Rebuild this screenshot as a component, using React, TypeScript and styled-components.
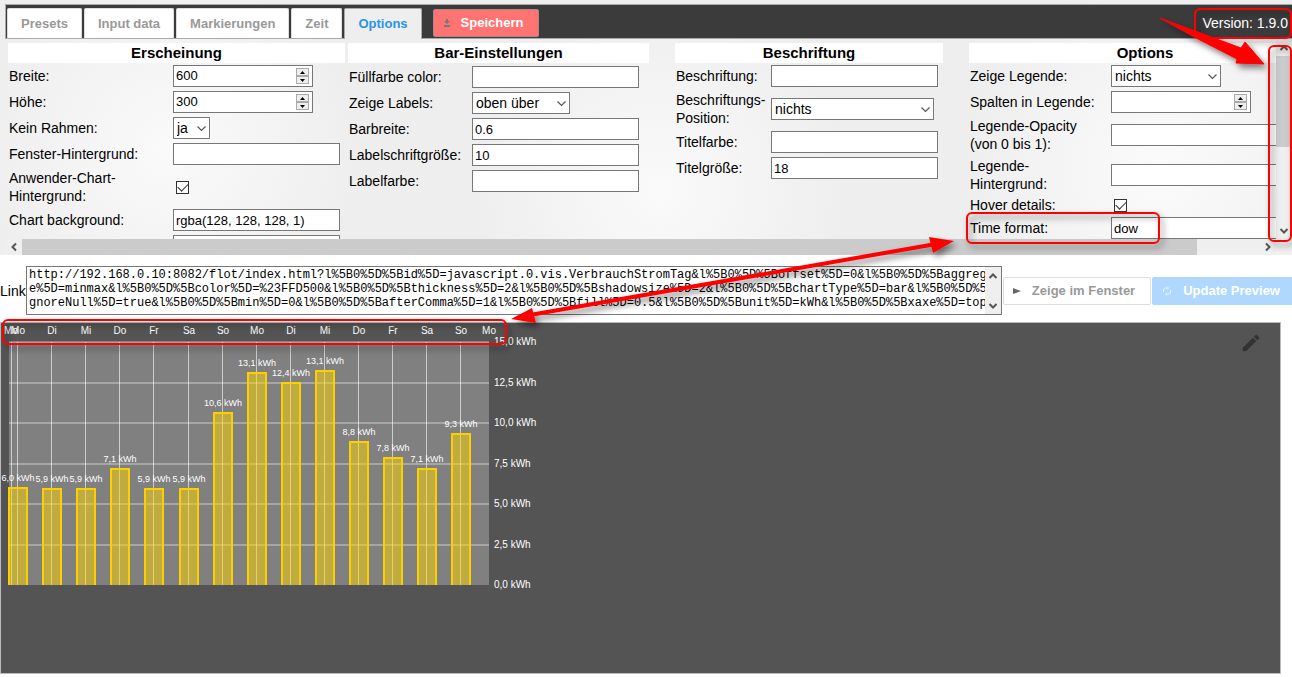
import React, { useId } from "react";
import styled, { createGlobalStyle, css } from "styled-components";

const Global = createGlobalStyle`
  * { box-sizing: border-box; }
  body {
    margin: 0;
    background: #fff;
    color: #000;
    font: 14px/18px "Liberation Sans", Arial, sans-serif;
    overflow: hidden;
  }
  input, select, textarea, button { font: inherit; margin: 0; border-radius: 0; }
`;

const Page = styled.div`
  position: relative;
`;

const Editor = styled.section`
  padding: 4px 0 0 5px;
  background:
    radial-gradient(circle at 170px 150px, #fafafa, rgba(250, 250, 250, 0) 190px),
    radial-gradient(circle at 660px 190px, #fafafa, rgba(250, 250, 250, 0) 190px),
    radial-gradient(circle at 1160px 170px, #fbfbfb, rgba(251, 251, 251, 0) 200px),
    #eee;
`;

const TabBar = styled.header`
  display: flex;
  align-items: flex-start;
  height: 35px;
  padding: 3px 0 0 1px;
  background: #3b3b3b;
  border: solid #aaa;
  border-width: 1px 0 1px 1px;
`;

const Tabs = styled.nav`
  display: flex;
  gap: 2px;
`;

const Tab = styled.button<{ $active?: boolean }>`
  height: ${(p) => (p.$active ? 31 : 30)}px;
  padding: 0 13px;
  border: 1px solid ${(p) => (p.$active ? "#aaa" : "#ddd")};
  border-bottom: 0;
  border-radius: 2px 2px 0 0;
  background: ${(p) => (p.$active ? "#eee" : "#fff")};
  color: ${(p) => (p.$active ? "#2694e8" : "#999")};
  font-size: 13px;
  font-weight: bold;
  white-space: nowrap;
`;

const Button = styled.button<{ $kind: "save" | "plain" | "primary" }>`
  display: flex;
  align-items: center;
  gap: 11px;
  height: 28px;
  padding: 0 15px 0 9px;
  border: 1px solid #ddd;
  border-radius: 2px;
  font-size: 13px;
  font-weight: bold;
  white-space: nowrap;
  flex: none;
  ${(p) =>
    p.$kind === "save" &&
    css`
      gap: 10px;
      margin: 1px 0 0 11px;
      background: #ff7373;
      border-color: #a88;
      color: #fff;
    `}
  ${(p) =>
    p.$kind === "plain" &&
    css`
      background: #fff;
      color: #999;
    `}
  ${(p) =>
    p.$kind === "primary" &&
    css`
      background: #b0d7fd;
      border-color: #b0d7fd;
      color: #fff;
    `}
`;

const Version = styled.span`
  margin-left: auto;
  padding: 6px 4px 0 0;
  color: #fff;
`;

const Scroller = styled.div`
  display: grid;
  grid-template-columns: minmax(0, 1fr) 16px;
  grid-template-rows: 200px 16px;
`;

const Columns = styled.div`
  display: flex;
  align-items: flex-start;
  padding: 4px 0 0 3px;
  overflow: hidden;
`;

const Group = styled.fieldset<{ $width: number; $label: number; $gap: number }>`
  display: grid;
  flex: none;
  width: ${(p) => p.$width}px;
  margin: 0 ${(p) => p.$gap}px 0 0;
  padding: 0;
  border: 0;
  --label: ${(p) => p.$label}px;
`;

const GroupTitle = styled.h2`
  height: 20px;
  margin: 0;
  background: #fff;
  font-size: 15px;
  line-height: 20px;
  text-align: center;
`;

const Row = styled.div<{ $h: number }>`
  display: grid;
  grid-template-columns: var(--label) auto;
  justify-content: start;
  align-items: center;
  height: ${(p) => p.$h}px;
  padding-left: 1px;
`;

const RowLabel = styled.label`
  white-space: pre-line;
`;

const TextInput = styled.input`
  width: 167px;
  height: 22px;
  padding: 0 2px;
  border: 1px solid #777;
  background: #fff;
  font-size: 13px;
`;

const NumberBox = styled.div`
  display: flex;
  align-items: center;
  width: 140px;
  height: 22px;
  padding-right: 3px;
  border: 1px solid #777;
  background: #fff;
`;

const NumberInput = styled.input`
  flex: 1;
  min-width: 0;
  padding: 0 2px;
  border: 0;
  background: none;
  font-size: 13px;
  appearance: textfield;
  &::-webkit-inner-spin-button { appearance: none; }
`;

const Spinner = styled.div`
  display: grid;
  width: 13px;
  height: 16px;
`;

const SpinButton = styled.button`
  display: grid;
  place-items: center;
  padding: 0;
  border: 1px solid #aaa;
  background: #eee;
`;

const SelectBox = styled.div<{ $w: number }>`
  position: relative;
  width: ${(p) => p.$w}px;
  height: 22px;
`;

const Select = styled.select`
  width: 100%;
  height: 100%;
  padding: 0 3px;
  border: 1px solid #777;
  background: #fff;
  color: #000;
  appearance: none;
`;

const SelectArrow = styled.svg`
  position: absolute;
  right: 4px;
  top: 9px;
  pointer-events: none;
`;

const Check = styled.input`
  appearance: none;
  display: grid;
  place-items: center;
  width: 13px;
  height: 13px;
  margin-left: 3px;
  border: 1px solid #333;
  background: #fff;
  &:checked::before {
    content: "";
    width: 9px;
    height: 5px;
    border: solid #333;
    border-width: 0 0 1px 1px;
    transform: translateY(-1px) rotate(-45deg);
  }
`;

const Scrollbar = styled.div<{ $dir: "row" | "column" }>`
  display: flex;
  flex-direction: ${(p) => p.$dir};
  min-width: 16px;
  background: #efefef;
`;

const ScrollButton = styled.button`
  display: grid;
  place-items: center;
  flex: 0 0 17px;
  padding: 0;
  border: 0;
  background: none;
`;

const Track = styled.div<{ $dir: "row" | "column" }>`
  display: flex;
  flex: 1;
  flex-direction: ${(p) => p.$dir};
`;

const Thumb = styled.div<{ $share: number }>`
  flex: 0 0 ${(p) => p.$share}%;
  background: #cbcbcb;
`;

const LinkRow = styled.div`
  display: flex;
  align-items: center;
  height: 67px;
  padding: 4px 0 0;
`;

const LinkLabel = styled.label`
  flex: none;
  width: 26px;
`;

const LinkBox = styled.div`
  display: flex;
  flex: 1;
  min-width: 0;
  height: 49px;
  margin-right: 1px;
  border: 1px solid #777;
`;

const LinkText = styled.textarea`
  flex: 1;
  min-width: 0;
  padding: 1px 0 1px 2px;
  border: 0;
  resize: none;
  overflow: hidden;
  white-space: pre;
  font: 12px/14px "Liberation Mono", "Courier New", monospace;
`;

const Actions = styled.div`
  display: flex;
  gap: 1px;
  flex: none;
  margin-right: -4px;
`;

const Preview = styled.section`
  position: relative;
  height: 352px;
  margin: 0 11px 0 0;
  border: 1px solid #bbb;
  background: #545454;
`;

const EditButton = styled.button`
  position: absolute;
  top: 9px;
  right: 18px;
  padding: 0;
  border: 0;
  background: none;
`;

const Chart = styled.svg`
  display: block;
`;

const Overlay = styled.svg`
  position: absolute;
  left: 0;
  top: 0;
  pointer-events: none;
  overflow: visible;
`;

function Chevron({ dir }: { dir: "up" | "down" | "left" | "right" }) {
  const turn = { up: 0, right: 90, down: 180, left: 270 }[dir];
  return (
    <svg width="10" height="10" viewBox="0 0 10 10" aria-hidden="true">
      <path d="M1.5 7 5 3.5 8.5 7" fill="none" stroke="#555" strokeWidth="2" transform={`rotate(${turn} 5 5)`} />
    </svg>
  );
}

type FieldDef = {
  label: string;
  kind: "text" | "number" | "select" | "check";
  value?: string;
  w?: number;
  h?: number;
};

function Field({ label, kind, value = "", w = 167, h = 26 }: FieldDef) {
  const id = useId();
  return (
    <Row $h={h}>
      <RowLabel htmlFor={id}>{label}</RowLabel>
      {kind === "text" && <TextInput id={id} defaultValue={value} />}
      {kind === "check" && <Check id={id} type="checkbox" defaultChecked />}
      {kind === "number" && (
        <NumberBox>
          <NumberInput id={id} type="number" defaultValue={value} />
          <Spinner>
            <SpinButton type="button" aria-label="Mehr">
              <svg width="5" height="3"><path d="M0 3 2.5 0 5 3z" /></svg>
            </SpinButton>
            <SpinButton type="button" aria-label="Weniger">
              <svg width="5" height="3"><path d="M0 0 2.5 3 5 0z" /></svg>
            </SpinButton>
          </Spinner>
        </NumberBox>
      )}
      {kind === "select" && (
        <SelectBox $w={w}>
          <Select id={id} defaultValue={value}>
            <option>{value}</option>
          </Select>
          <SelectArrow width="9" height="6" viewBox="0 0 9 6">
            <path d="M.5 .5 4.5 4.5 8.5 .5" fill="none" stroke="#555" strokeWidth="1.2" />
          </SelectArrow>
        </SelectBox>
      )}
    </Row>
  );
}

const groups: { title: string; width: number; label: number; gap: number; fields: FieldDef[] }[] = [
  {
    title: "Erscheinung",
    width: 337,
    label: 164,
    gap: 3,
    fields: [
      { label: "Breite:", kind: "number", value: "600" },
      { label: "Höhe:", kind: "number", value: "300" },
      { label: "Kein Rahmen:", kind: "select", value: "ja", w: 37 },
      { label: "Fenster-Hintergrund:", kind: "text" },
      { label: "Anwender-Chart-\nHintergrund:", kind: "check", h: 40 },
      { label: "Chart background:", kind: "text", value: "rgba(128, 128, 128, 1)" },
      { label: "", kind: "text" },
    ],
  },
  {
    title: "Bar-Einstellungen",
    width: 301,
    label: 123,
    gap: 26,
    fields: [
      { label: "Füllfarbe color:", kind: "text", h: 27 },
      { label: "Zeige Labels:", kind: "select", value: "oben über", w: 98 },
      { label: "Barbreite:", kind: "text", value: "0.6" },
      { label: "Labelschriftgröße:", kind: "text", value: "10" },
      { label: "Labelfarbe:", kind: "text" },
    ],
  },
  {
    title: "Beschriftung",
    width: 268,
    label: 95,
    gap: 26,
    fields: [
      { label: "Beschriftung:", kind: "text" },
      { label: "Beschriftungs-\nPosition:", kind: "select", value: "nichts", w: 163, h: 40 },
      { label: "Titelfarbe:", kind: "text" },
      { label: "Titelgröße:", kind: "text", value: "18" },
    ],
  },
  {
    title: "Options",
    width: 352,
    label: 141,
    gap: 0,
    fields: [
      { label: "Zeige Legende:", kind: "select", value: "nichts", w: 110 },
      { label: "Spalten in Legende:", kind: "number" },
      { label: "Legende-Opacity\n(von 0 bis 1):", kind: "text", h: 40 },
      { label: "Legende-\nHintergrund:", kind: "text", h: 40 },
      { label: "Hover details:", kind: "check", h: 20 },
      { label: "Time format:", kind: "text", value: "dow" },
    ],
  },
];

const link = [
  "http://192.168.0.10:8082/flot/index.html?l%5B0%5D%5Bid%5D=javascript.0.vis.VerbrauchStromTag&l%5B0%5D%5Boffset%5D=0&l%5B0%5D%5Baggregat",
  "e%5D=minmax&l%5B0%5D%5Bcolor%5D=%23FFD500&l%5B0%5D%5Bthickness%5D=2&l%5B0%5D%5Bshadowsize%5D=2&l%5B0%5D%5BchartType%5D=bar&l%5B0%5D%5Bi",
  "gnoreNull%5D=true&l%5B0%5D%5Bmin%5D=0&l%5B0%5D%5BafterComma%5D=1&l%5B0%5D%5Bfill%5D=0.5&l%5B0%5D%5Bunit%5D=kWh&l%5B0%5D%5Bxaxe%5D=top&t",
].join("\n");

const bars: [string, string, number][] = [
  ["Mo", "6,0", 6.0], ["Di", "5,9", 5.95], ["Mi", "5,9", 5.92], ["Do", "7,1", 7.15],
  ["Fr", "5,9", 5.95], ["Sa", "5,9", 5.92], ["So", "10,6", 10.6], ["Mo", "13,1", 13.1],
  ["Di", "12,4", 12.45], ["Mi", "13,1", 13.2], ["Do", "8,8", 8.85], ["Fr", "7,8", 7.85],
  ["Sa", "7,1", 7.15], ["So", "9,3", 9.3],
];
const ticks = ["0,0", "2,5", "5,0", "7,5", "10,0", "12,5", "15,0"];
const plot = { left: 8, right: 488, top: 19, bottom: 262 };
const barX = (i: number) => Math.round(17 + i * 34.1);
const valueY = (v: number) => Math.round(plot.bottom - (v / 15) * (plot.bottom - plot.top));

function BarChart() {
  return (
    <Chart width="600" height="300" fontSize="10" fill="#fff" textAnchor="middle">
      <rect x={plot.left} y={plot.top} width={plot.right - plot.left} height={plot.bottom - plot.top} fill="#808080" />
      <g stroke="#fff" strokeOpacity=".3" strokeWidth="2">
        {ticks.slice(1).map((t, i) => (
          <path key={t} d={`M${plot.left} ${valueY((i + 1) * 2.5)}H${plot.right}`} />
        ))}
      </g>
      <g stroke="#fff" strokeOpacity=".6">
        <path d={`M10.5 ${plot.top}V${plot.bottom}`} />
        {bars.map((_, i) => (
          <path key={i} d={`M${barX(i) - 0.5} ${plot.top}V${plot.bottom}`} />
        ))}
      </g>
      {bars.map(([, , v], i) => (
        <path
          key={i}
          d={`M${barX(i) - 9} ${plot.bottom}V${valueY(v)}h18V${plot.bottom}`}
          fill="#ffd500"
          fillOpacity=".5"
          stroke="#fcd000"
          strokeWidth="2"
        />
      ))}
      <g fontSize="9">
        {bars.map(([, label, v], i) => (
          <text key={i} x={barX(i)} y={valueY(v) - 7}>{`${label} kWh`}</text>
        ))}
      </g>
      <text x="10" y="11">Mo</text>
      {bars.map(([day], i) => (
        <text key={i} x={barX(i)} y="11">{day}</text>
      ))}
      <text x="488" y="11">Mo</text>
      <g textAnchor="start">
        {ticks.map((t, i) => (
          <text key={t} x="493" y={valueY(i * 2.5) + 3}>{`${t} kWh`}</text>
        ))}
      </g>
    </Chart>
  );
}

function Annotations() {
  return (
    <Overlay width="100%" height="100%" aria-hidden="true">
      <defs>
        <filter id="shadow" x="-10%" y="-10%" width="120%" height="130%">
          <feDropShadow dx="3" dy="4" stdDeviation="3" floodOpacity=".5" />
        </filter>
      </defs>
      <g filter="url(#shadow)" fill="none" stroke="#f00" strokeWidth="2">
        <rect x="1195" y="9" width="96" height="29" rx="5" />
        <rect x="1269" y="46" width="22" height="195" rx="5" />
        <rect x="967" y="213" width="192" height="30" rx="5" />
        <rect x="3" y="320" width="503" height="24" rx="5" />
        <path d="M530 315 936 244" strokeWidth="4" />
        <g fill="#f00" stroke="none">
          <path d="M511 319 532 308 536 323z" />
          <path d="M954 241 929 237 933 253z" />
          <path d="M1160 18 1241 48 1245 42 1264 64 1236 63 1237 59 1198 39z" stroke="#f00" strokeWidth="1" />
        </g>
      </g>
    </Overlay>
  );
}

export default function App() {
  return (
    <Page>
      <Global />
      <Editor>
        <TabBar>
          <Tabs>
            {["Presets", "Input data", "Markierungen", "Zeit", "Options"].map((name) => (
              <Tab key={name} $active={name === "Options"}>{name}</Tab>
            ))}
          </Tabs>
          <Button $kind="save">
            <svg width="8" height="10" viewBox="1 0 8 10"><path d="M4 1h2v2h2L5 6 2 3h2zM2 7h6v2H2z" fill="#777" /></svg>
            Speichern
          </Button>
          <Version>Version: 1.9.0</Version>
        </TabBar>
        <Scroller>
          <Columns>
            {groups.map((g) => (
              <Group key={g.title} $width={g.width} $label={g.label} $gap={g.gap}>
                <GroupTitle>{g.title}</GroupTitle>
                {g.fields.map((f, i) => (
                  <Field key={i} {...f} />
                ))}
              </Group>
            ))}
          </Columns>
          <Scrollbar $dir="column">
            <ScrollButton aria-label="Nach oben"><Chevron dir="up" /></ScrollButton>
            <Track $dir="column"><Thumb $share={55} /></Track>
            <ScrollButton aria-label="Nach unten"><Chevron dir="down" /></ScrollButton>
          </Scrollbar>
          <Scrollbar $dir="row">
            <ScrollButton aria-label="Nach links"><Chevron dir="left" /></ScrollButton>
            <Track $dir="row"><Thumb $share={95} /></Track>
            <ScrollButton aria-label="Nach rechts"><Chevron dir="right" /></ScrollButton>
          </Scrollbar>
        </Scroller>
      </Editor>
      <LinkRow>
        <LinkLabel htmlFor="link">Link</LinkLabel>
        <LinkBox>
          <LinkText id="link" defaultValue={link} spellCheck={false} />
          <Scrollbar $dir="column">
            <ScrollButton aria-label="Link nach oben"><Chevron dir="up" /></ScrollButton>
            <Track $dir="column" />
            <ScrollButton aria-label="Link nach unten"><Chevron dir="down" /></ScrollButton>
          </Scrollbar>
        </LinkBox>
        <Actions>
          <Button $kind="plain">
            <svg width="8" height="8" viewBox="0 0 8 8"><path d="M0 1 8 4 0 7z" fill="#666" /></svg>
            Zeige im Fenster
          </Button>
          <Button $kind="primary">
            <svg width="10" height="10" viewBox="0 0 10 10" fill="none" stroke="#e6f3ff">
              <path d="M1.5 6V4a2 2 0 0 1 2-2H6M8.500 4v2a2 2 0 0 1-2 2H4M5 .5 6.500 2 5 3.500M5 6.500 3.500 8 5 9.500" />
            </svg>
            Update Preview
          </Button>
        </Actions>
      </LinkRow>
      <Preview>
        <BarChart />
        <EditButton aria-label="Bearbeiten">
          <svg width="22" height="22" viewBox="0 0 24 24" fill="#333">
            <path d="M3 17.250V21h3.750L17.810 9.940l-3.750-3.750L3 17.250zM20.710 7.040a1 1 0 0 0 0-1.410l-2.340-2.340a1 1 0 0 0-1.410 0l-1.830 1.830 3.750 3.750 1.830-1.830z" />
          </svg>
        </EditButton>
      </Preview>
      <Annotations />
    </Page>
  );
}
